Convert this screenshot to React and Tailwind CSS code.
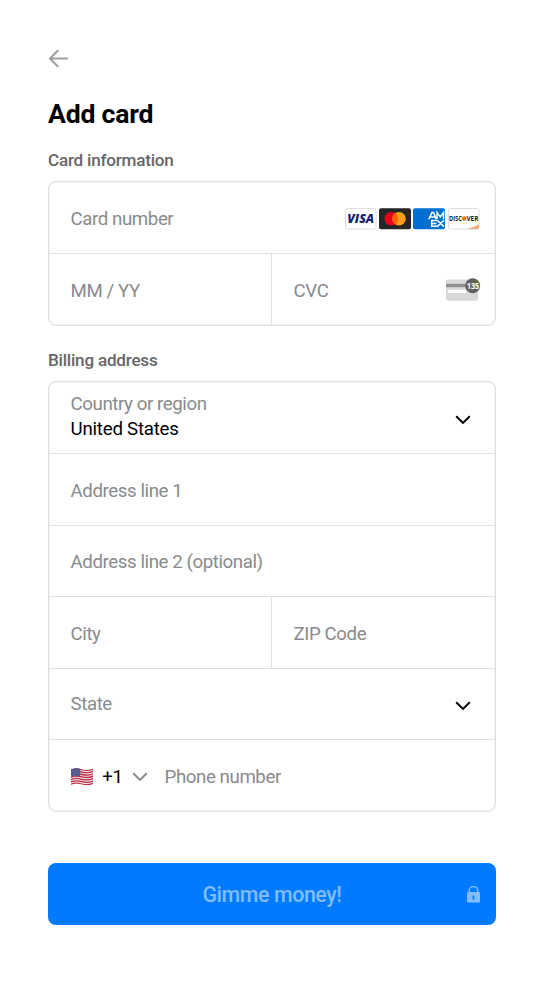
import React from "react";

function Chevron({ className }) {
  return (
    <svg className={className} width="16" height="10" viewBox="0 0 16 10" fill="none" stroke="currentColor" strokeWidth="2">
      <path d="M1.2 1.2L8 7.9L14.8 1.2" />
    </svg>
  );
}

function Visa() {
  return (
    <svg width="32" height="22" viewBox="0 0 32 22">
      <rect x="0.5" y="0.5" width="30.5" height="20.5" rx="1.8" fill="#fff" stroke="#dedede" />
      <text x="2.2" y="15" fontFamily="'Open Sans', sans-serif" fontSize="12" fontWeight="800" fontStyle="italic" fill="#191e6e" textLength="27" lengthAdjust="spacingAndGlyphs">VISA</text>
    </svg>
  );
}

function Mastercard() {
  return (
    <svg width="32" height="22" viewBox="0 0 32 22">
      <rect x="0" y="0.2" width="32" height="21" rx="2" fill="#252525" />
      <circle cx="12.3" cy="10.8" r="6.8" fill="#eb001b" />
      <circle cx="20" cy="10.8" r="6.8" fill="#f79e1b" />
      <path d="M16.15 5.2a6.8 6.8 0 0 1 0 11.2a6.8 6.8 0 0 1 0-11.2z" fill="#ff5f00" />
    </svg>
  );
}

function Amex() {
  return (
    <svg width="32" height="22" viewBox="0 0 32 22">
      <rect x="0" y="0.2" width="32" height="21" rx="2" fill="#016fd0" />
      <g fill="none" stroke="#fff" strokeWidth="1.5">
        <path d="M15.8 11.2L19 4.5h1.5l2.8 6.7M17.5 9h4.2M24 11.2V4.5l3.2 4.4l3.3-4.4v6.7" />
        <path d="M24 12.5h-5.3v5.8H24M18.7 15.4h4.8M24.2 12.3l6.8 6.3M31 12.3l-6.8 6.3" />
      </g>
    </svg>
  );
}

function Discover() {
  return (
    <svg width="32" height="22" viewBox="0 0 32 22">
      <rect x="0.5" y="0.5" width="30.5" height="20.5" rx="1.8" fill="#fff" stroke="#dedede" />
      <path d="M18.5 21C24 20 28 18 31 16v3.4q0 1.6-1.6 1.6z" fill="#f9a873" />
      <g fontFamily="'Open Sans', sans-serif" fontSize="6.2" fontWeight="700" fill="#222">
        <text x="0.9" y="12.8" textLength="13" lengthAdjust="spacingAndGlyphs">DISC</text>
        <text x="18.4" y="12.8" textLength="12" lengthAdjust="spacingAndGlyphs">VER</text>
      </g>
      <circle cx="16.1" cy="10.6" r="2.3" fill="#f47216" />
    </svg>
  );
}

function CvcCard() {
  return (
    <svg className="-mt-1 tracking-normal" width="36" height="24" viewBox="0 0 36 24">
      <rect x="0" y="2.6" width="32" height="21.2" rx="2.8" fill="#d9d9d9" />
      <rect x="0" y="6.8" width="32" height="3.4" fill="#919191" />
      <rect x="2.2" y="12.8" width="18" height="3.2" fill="#fff" />
      <circle cx="26.7" cy="8.8" r="7.5" fill="#616161" />
      <text x="20.7" y="12" fontFamily="'Open Sans', sans-serif" fontSize="8.8" fontWeight="700" fill="#fff" textLength="12.6" lengthAdjust="spacingAndGlyphs">135</text>
    </svg>
  );
}

function Flag() {
  return (
    <svg width="22" height="18" viewBox="0 0 22 18">
      <defs>
        <clipPath id="flag"><path d="M0 1.5C5-.8 8 .5 11 1.2S18 2.4 22 .5V16.2C18 18 14 17.2 11 16.4S4 15 0 17z" /></clipPath>
      </defs>
      <g clipPath="url(#flag)">
        <rect width="22" height="18" fill="#f3e9eb" />
        <g fill="none" stroke="#bd2840" strokeWidth="1.3">
          <path d="M0 2C5-.3 8 1 11 1.7S18 2.9 22 1" />
          <path d="M0 4.4C5 2.1 8 3.4 11 4.1S18 5.3 22 3.4" />
          <path d="M0 6.8C5 4.5 8 5.8 11 6.5S18 7.7 22 5.8" />
          <path d="M0 9.2C5 6.9 8 8.2 11 8.9S18 10.1 22 8.2" />
          <path d="M0 11.6C5 9.3 8 10.6 11 11.3S18 12.5 22 10.6" />
          <path d="M0 14C5 11.7 8 13 11 13.7S18 14.9 22 13" />
          <path d="M0 16.4C5 14.1 8 15.4 11 16.1S18 17.3 22 15.4" />
        </g>
        <path d="M0 0H9.2V8.6C6 7.6 3 7.8 0 9z" fill="#4b5086" />
        <g stroke="#a9abc8" strokeWidth=".6" strokeDasharray=".7 1.1">
          <path d="M.8 2.7L9 1.7M.2 4.4L9 3.4M.8 6.1L9 5.2M.2 7.8L9 7" />
        </g>
      </g>
    </svg>
  );
}

function Cell({ children, className = "" }) {
  return <div className={"flex items-center pl-[21.6px] " + className}>{children}</div>;
}

export default function App() {
  return (
    <main className="flex h-[1000px] w-[544px] flex-col bg-white px-12 pt-[49px] font-['Roboto',sans-serif] text-[18.7px] leading-[25px] tracking-[-0.43px] text-[#8a8a8c]">
      <svg width="22" height="20" viewBox="0 0 22 20" fill="none" stroke="#a0a0a0" strokeWidth="2.2" strokeLinecap="round" strokeLinejoin="round">
        <path d="M19 9.5H2.2M9.6 1.8L2 9.5L9.6 17.2" />
      </svg>
      <h1 className="mt-[27px] h-9 text-[26.6px] leading-9 font-bold tracking-[-0.2px] text-black">Add card</h1>
      <h2 className="mt-[16px] h-6 text-[17.1px] leading-6 font-medium tracking-[-0.22px] text-[#666]">Card information</h2>
      <section className="mt-[9px] h-[145px] w-[448px] divide-y divide-[#e0e0e0] rounded-[8px] border border-[#e0e0e0] shadow-[inset_0_0_0_0.5px_#e6e6e6]">
        <Cell className="h-[72px] justify-between pr-[15.5px]">
          <span className="pt-[3px]">Card number</span>
          <div className="flex gap-[2.3px] pt-[3px] tracking-normal"><Visa /><Mastercard /><Amex /><Discover /></div>
        </Cell>
        <div className="flex h-[71px] divide-x divide-[#e0e0e0]">
          <Cell className="w-[223px] pt-[3px]">MM / YY</Cell>
          <Cell className="flex-1 justify-between pt-[3px] pr-[13px]"><span>CVC</span><CvcCard /></Cell>
        </div>
      </section>
      <h2 className="mt-[22px] h-6 text-[17.1px] leading-6 font-medium tracking-[-0.22px] text-[#666]">Billing address</h2>
      <section className="mt-[9px] h-[431px] w-[448px] divide-y divide-[#e0e0e0] rounded-[8px] border border-[#e0e0e0] shadow-[inset_0_0_0_0.5px_#e6e6e6]">
        <Cell className="h-[72px] justify-between pr-[24.4px]">
          <div className="-mt-px"><p>Country or region</p><p className="tracking-[-0.24px] text-black">United States</p></div>
          <Chevron className="mt-1 text-black" />
        </Cell>
        <Cell className="h-[72px] pt-[3px]">Address line 1</Cell>
        <Cell className="h-[71px] pt-[3px]">Address line 2 (optional)</Cell>
        <div className="flex h-[72px] divide-x divide-[#e0e0e0]">
          <Cell className="w-[223px] pt-[3px]">City</Cell><Cell className="flex-1 pt-[3px]">ZIP Code</Cell>
        </div>
        <Cell className="h-[71px] justify-between pr-[24.4px]"><span>State</span><Chevron className="mt-1 text-black" /></Cell>
        <Cell className="h-[71px] pt-[3px]">
          <Flag /><span className="ml-[9.6px] tracking-[-0.3px] text-black">+1</span><Chevron className="ml-[9.3px]" /><span className="ml-[16.6px]">Phone number</span>
        </Cell>
      </section>
      <button className="mt-[51px] grid h-[62px] w-[448px] grid-cols-[1fr_auto_1fr] items-center rounded-[8px] bg-[#007aff] text-[21.4px] font-medium tracking-[-0.42px] text-[#80bdff]">
        <span />
        <span>Gimme money!</span>
        <svg className="mr-4 justify-self-end" width="13" height="17" viewBox="0 0 13 17">
          <path d="M2.2 7V4.7a4.3 4.1 0 0 1 8.6 0V7" fill="none" stroke="#80bdff" strokeWidth="1.5" />
          <rect y="6" width="13" height="10.6" rx="1.4" fill="#80bdff" />
          <path d="M6.5 10.2v2.8" stroke="#007aff" strokeWidth="1.7" strokeLinecap="round" />
        </svg>
      </button>
    </main>
  );
}
